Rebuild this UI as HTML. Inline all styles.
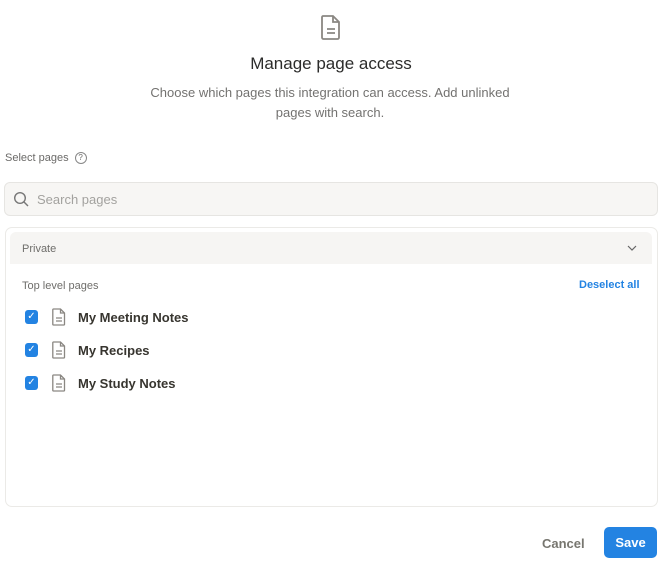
<!DOCTYPE html><html><head><style>
body{margin:0;width:670px;height:572px;background:#fff;font-family:"Liberation Sans",sans-serif;position:relative;overflow:hidden}
.a{position:absolute}
.doc{stroke:#8a8782;fill:none;stroke-width:1.3}
</style></head><body>
<svg class="a" style="left:320px;top:14px" width="22" height="26" viewBox="0 0 22 26"><path d="M3 2h10l6 6v15.5a1.5 1.5 0 0 1-1.5 1.5h-14A1.5 1.5 0 0 1 2 23.5V3.5A1.5 1.5 0 0 1 3 2z" fill="none" stroke="#8a8782" stroke-width="1.8"/><path d="M13 2v6h6M7 15h8M7 19h8" fill="none" stroke="#8a8782" stroke-width="1.8"/></svg>
<div class="a" style="left:0;width:662px;top:54px;text-align:center;font-size:17px;color:#2c2c2b">Manage page access</div>
<div class="a" style="left:136px;width:388px;top:83px;text-align:center;font-size:13px;line-height:20px;color:#737270">Choose which pages this integration can access. Add unlinked pages with search.</div>
<div class="a" style="left:5px;top:152px;font-size:11px;color:#6b6a68">Select pages <span style="display:inline-block;width:10px;height:10px;border:1px solid #888;border-radius:50%;font-size:8px;line-height:10px;text-align:center;vertical-align:1px;margin-left:3px">?</span></div>
<div class="a" style="left:4px;top:182px;width:652px;height:32px;border:1px solid #e6e5e2;border-radius:6px;background:#f7f6f4"></div>
<svg class="a" style="left:13px;top:191px" width="16" height="16" viewBox="0 0 16 16"><circle cx="7" cy="7" r="5.3" fill="none" stroke="#777" stroke-width="1.4"/><path d="M11 11l4 4" stroke="#777" stroke-width="1.4"/></svg>
<div class="a" style="left:37px;top:192px;font-size:13px;color:#a3a29f">Search pages</div>
<div class="a" style="left:5px;top:227px;width:651px;height:278px;border:1px solid #ebeae7;border-radius:7px"></div>
<div class="a" style="left:10px;top:232px;width:642px;height:32px;background:#f6f5f3;border-radius:6px 6px 0 0"></div>
<div class="a" style="left:22px;top:243px;font-size:11px;color:#6f6e6b">Private</div>
<svg class="a" style="left:627px;top:244px" width="10" height="8" viewBox="0 0 10 8"><path d="M1 2l4 4 4-4" fill="none" stroke="#666" stroke-width="1.2"/></svg>
<div class="a" style="left:22px;top:280px;font-size:11px;color:#6f6e6b">Top level pages</div>
<div class="a" style="left:579px;top:279px;font-size:11px;color:#2383e2;font-weight:bold">Deselect all</div>
<div class="a" style="left:25px;top:310px;width:13px;height:14px;background:#2383e2;border-radius:3px;color:#fff;font-size:10px;text-align:center;line-height:14px">✓</div>
<div class="a" style="left:25px;top:343px;width:13px;height:14px;background:#2383e2;border-radius:3px;color:#fff;font-size:10px;text-align:center;line-height:14px">✓</div>
<div class="a" style="left:25px;top:376px;width:13px;height:14px;background:#2383e2;border-radius:3px;color:#fff;font-size:10px;text-align:center;line-height:14px">✓</div>
<svg class="a" style="left:52px;top:308px" width="14" height="18" viewBox="0 0 14 18"><path class="doc" d="M1.5 1h7l4 4v11.3a.7.7 0 0 1-.7.7H1.5a.7.7 0 0 1-.7-.7V1.7a.7.7 0 0 1 .7-.7zM8.5 1v4h4M4 10h6M4 13h6"/></svg>
<svg class="a" style="left:52px;top:341px" width="14" height="18" viewBox="0 0 14 18"><path class="doc" d="M1.5 1h7l4 4v11.3a.7.7 0 0 1-.7.7H1.5a.7.7 0 0 1-.7-.7V1.7a.7.7 0 0 1 .7-.7zM8.5 1v4h4M4 10h6M4 13h6"/></svg>
<svg class="a" style="left:52px;top:374px" width="14" height="18" viewBox="0 0 14 18"><path class="doc" d="M1.5 1h7l4 4v11.3a.7.7 0 0 1-.7.7H1.5a.7.7 0 0 1-.7-.7V1.7a.7.7 0 0 1 .7-.7zM8.5 1v4h4M4 10h6M4 13h6"/></svg>
<div class="a" style="left:78px;top:310px;font-size:13px;color:#37352f;font-weight:bold">My Meeting Notes</div>
<div class="a" style="left:78px;top:343px;font-size:13px;color:#37352f;font-weight:bold">My Recipes</div>
<div class="a" style="left:78px;top:376px;font-size:13px;color:#37352f;font-weight:bold">My Study Notes</div>
<div class="a" style="left:542px;top:536px;font-size:13px;color:#77766f;font-weight:bold">Cancel</div>
<div class="a" style="left:604px;top:527px;width:53px;height:31px;background:#2383e2;border-radius:5px;color:#fff;font-size:13px;font-weight:bold;text-align:center;line-height:31px">Save</div>
</body></html>
